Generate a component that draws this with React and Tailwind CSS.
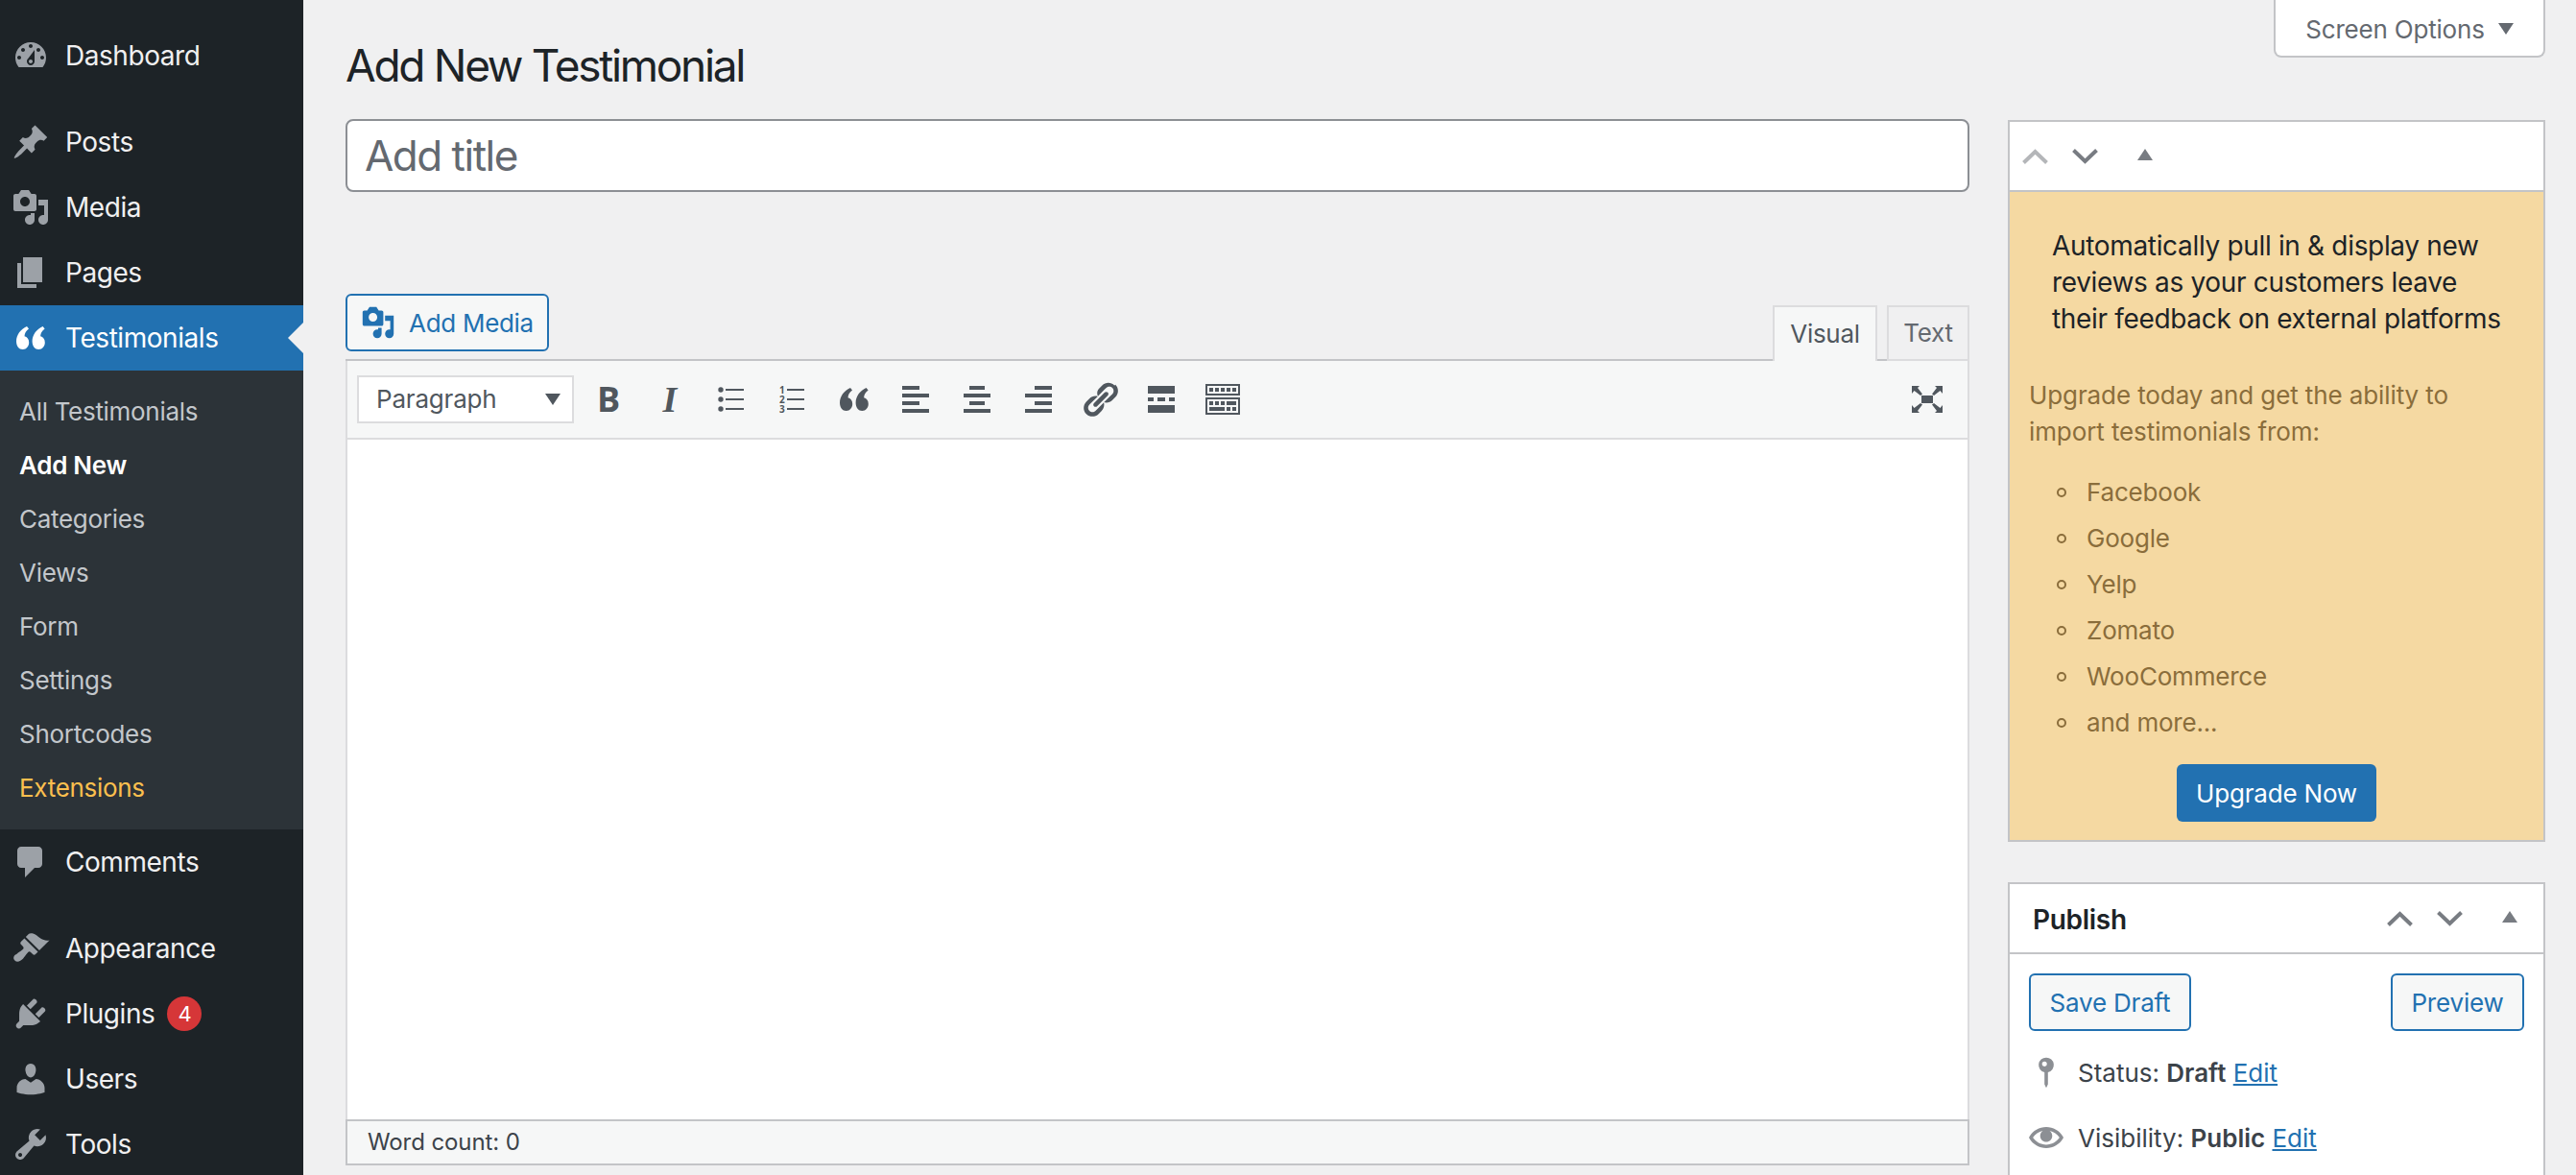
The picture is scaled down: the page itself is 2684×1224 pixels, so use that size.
const paths = {
  dashboard: 'M3.76 16h12.48c1.1-1.37 1.76-3.11 1.76-5 0-4.42-3.58-8-8-8s-8 3.58-8 8c0 1.89.66 3.63 1.76 5zM10 4c.55 0 1 .45 1 1s-.45 1-1 1-1-.45-1-1 .45-1 1-1zM6 6c.55 0 1 .45 1 1s-.45 1-1 1-1-.45-1-1 .45-1 1-1zm8 0c.55 0 1 .45 1 1s-.45 1-1 1-1-.45-1-1 .45-1 1-1zm-5.37 5.55L12 7v6c0 1.1-.9 2-2 2s-2-.9-2-2c0-.57.24-1.08.63-1.45zM4 10c.55 0 1 .45 1 1s-.45 1-1 1-1-.45-1-1 .45-1 1-1zm12 0c.55 0 1 .45 1 1s-.45 1-1 1-1-.45-1-1 .45-1 1-1zm-5 3c0-.55-.45-1-1-1s-1 .45-1 1 .45 1 1 1 1-.45 1-1z',
  post: 'M10.44 3.02l1.82-1.82 6.36 6.35-1.83 1.82c-1.05-.68-2.48-.57-3.41.36l-.75.75c-.92.93-1.04 2.35-.35 3.41l-1.83 1.82-2.41-2.41-2.8 2.79c-.42.42-3.38 2.71-3.8 2.29s1.86-3.39 2.28-3.81l2.79-2.79L4.1 9.36l1.83-1.82c1.05.69 2.48.57 3.4-.36l.75-.75c.93-.92 1.05-2.35.36-3.41z',
  media: 'M13 11V4c0-.55-.45-1-1-1h-1.67L9 1H5L3.67 3H2c-.55 0-1 .45-1 1v7c0 .55.45 1 1 1h10c.55 0 1-.45 1-1zM7 4.5c1.38 0 2.5 1.12 2.5 2.5S8.38 9.5 7 9.5 4.5 8.38 4.5 7 5.62 4.5 7 4.5zM14 6h5v10.5c0 1.38-1.12 2.5-2.5 2.5S14 17.88 14 16.5s1.12-2.5 2.5-2.5c.17 0 .34.02.5.05V9h-3V6zm-4 8.05V13h2v3.5c0 1.38-1.12 2.5-2.5 2.5S7 17.88 7 16.5 8.12 14 9.5 14c.17 0 .34.02.5.05z',
  page: 'M6 15V2h10v13H6zm-1 1h8v2H3V5h2v11z',
  comments: 'M5 2h9c1.1 0 2 .9 2 2v7c0 1.1-.9 2-2 2h-2l-5 5v-5H5c-1.1 0-2-.9-2-2V4c0-1.1.9-2 2-2z',
  appearance: 'M14.48 11.06L7.41 3.99l1.5-1.5c.5-.56 2.3-.47 3.51.32 1.21.8 1.43 1.28 2.91 2.1 1.18.64 2.45 1.26 4.45.85zm-.71.71L6.7 4.7 4.93 6.47c-.39.39-.39 1.02 0 1.41l1.06 1.06c.39.39.39 1.03 0 1.42-.6.6-1.43 1.11-2.21 1.69-.35.26-.7.53-1.01.84C1.43 13.23.4 14.96 1.7 16.26c1.3 1.3 3.04.27 4.37-1.07.31-.31.58-.66.85-1.02.57-.78 1.08-1.61 1.69-2.21.39-.39 1.02-.39 1.41 0l1.06 1.06c.39.39 1.02.39 1.41 0z',
  plugins: 'M13.11 4.36L9.87 7.6 8 5.73l3.24-3.24c.35-.34 1.05-.2 1.56.32.52.51.66 1.21.31 1.55zm-8 1.77l.91-1.12 9.01 9.01-1.19.84c-.71.71-2.63 1.16-3.82 1.16H6.14L4.9 17.26c-.59.59-1.54.59-2.12 0-.59-.58-.59-1.53 0-2.12l1.24-1.24v-3.88c0-1.13.4-3.19 1.09-3.89zm7.26 3.97l3.24-3.24c.34-.35 1.04-.21 1.55.31.52.51.66 1.21.31 1.55l-3.24 3.25z',
  users: 'M10 9.25c-2.27 0-2.73-3.44-2.73-3.44C7 4.02 7.82 2 9.97 2c2.16 0 2.98 2.02 2.71 3.81 0 0-.41 3.44-2.68 3.44zm0 2.57L12.72 10c2.39 0 4.52 2.33 4.52 4.53v2.49s-3.65 1.13-7.24 1.13c-3.65 0-7.24-1.13-7.24-1.13v-2.49c0-2.25 1.94-4.48 4.47-4.48z',
  tools: 'M16.68 9.77c-1.34 1.34-3.3 1.67-4.95.99l-5.41 6.52c-.99.99-2.59.99-3.58 0s-.99-2.59 0-3.57l6.52-5.42c-.68-1.65-.35-3.61.99-4.95 1.28-1.28 3.12-1.62 4.72-1.06l-2.89 2.89 2.82 2.82 2.86-2.87c.53 1.58.18 3.39-1.08 4.65zM3.81 16.21c.4.39 1.04.39 1.43 0 .4-.4.4-1.04 0-1.43-.39-.4-1.03-.4-1.43 0-.39.39-.39 1.03 0 1.43z',
  eye: 'M19.7 9.4C17.7 6 14 3.9 10 3.9S2.3 6 .3 9.4L0 10l.3.6c2 3.4 5.7 5.5 9.7 5.5s7.7-2.1 9.7-5.5l.3-.6-.3-.6zM10 14.1c-3.1 0-6-1.6-7.7-4.1C3.6 8 5.7 6.6 8 6.1c-.9.6-1.5 1.7-1.5 2.9 0 1.9 1.6 3.5 3.5 3.5s3.5-1.6 3.5-3.5c0-1.2-.6-2.3-1.5-2.9 2.3.5 4.4 1.9 5.7 3.9-1.7 2.5-4.6 4.1-7.7 4.1z',
  pin: 'M10 1.500a4.300 4.300 0 0 1 1 8.500V17l-1 2-1-2v-7a4.300 4.300 0 0 1 1-8.500zM9 3.800a1.400 1.400 0 1 0 0 2.800 1.400 1.400 0 0 0 0-2.800z',
  link: 'M17.74 2.76c1.68 1.69 1.68 4.41 0 6.1l-1.53 1.52c-1.12 1.12-2.7 1.47-4.14 1.09l2.62-2.61.76-.77.76-.76c.84-.84.84-2.2 0-3.04-.84-.85-2.2-.85-3.04 0l-.77.76-3.38 3.38c-.37-.77-.44-1.64-.21-2.44.14-.5.4-.98.8-1.38l1.53-1.53c1.68-1.68 4.41-1.68 6.1 0zM8.59 13.43l5.34-5.34c.42-.42.42-1.1 0-1.52-.44-.43-1.13-.39-1.53 0l-5.33 5.34c-.42.42-.42 1.1 0 1.52.44.43 1.13.39 1.52 0zm-.76 2.29l4.14-4.15c.38 1.44.03 3.02-1.09 4.14l-1.52 1.53c-1.69 1.68-4.41 1.68-6.1 0-1.68-1.68-1.68-4.42 0-6.1l1.53-1.52c1.12-1.12 2.7-1.47 4.14-1.1l-4.14 4.15c-.85.84-.85 2.2 0 3.05.84.84 2.2.84 3.04 0z',
}

function Dash({ name, className }) {
  return (
    <svg viewBox="0 0 20 20" className={className} fill="currentColor" fillRule="evenodd">
      <path d={paths[name]} />
    </svg>
  )
}

// the "66" quote mark, used in the menu and in the toolbar
function Quote({ className }) {
  return (
    <svg viewBox="0 0 30 24" className={className} fill="currentColor">
      <path d="M11 0l2 2.500C10 5 8.800 7 8.500 10.300c2.800.5 4.700 3 4.700 6.500 0 4-2.700 7.200-6.500 7.200S0 20.500 0 15.500C0 8.800 4.500 3 11 0z" />
      <path d="M27.600 0l2 2.500c-3 2.500-4.200 4.500-4.500 7.800 2.800.5 4.700 3 4.700 6.500 0 4-2.700 7.200-6.500 7.200s-6.700-3.500-6.700-8.500c0-6.700 4.500-12.500 11-15.500z" />
    </svg>
  )
}

const topItems = [
  { icon: 'post', label: 'Posts' },
  { icon: 'media', label: 'Media' },
  { icon: 'page', label: 'Pages' },
]
const subItems = ['All Testimonials', 'Add New', 'Categories', 'Views', 'Form', 'Settings', 'Shortcodes', 'Extensions']

function MenuItem({ icon, label, active, children }) {
  return (
    <div className={`flex h-[68px] items-center text-[28px] tracking-[-0.45px] ${active ? 'bg-[#2271b1] text-white' : 'text-[#f0f0f1]'}`}>
      <div className={`ml-[12px] w-[40px] h-[40px] shrink-0 flex items-center justify-center ${active ? 'text-white' : 'text-[#9ca1a7]'}`}>
        {icon === 'quote' ? <Quote className="w-[30px] h-[24px]" /> : <Dash name={icon} className="w-[40px] h-[40px]" />}
      </div>
      <span className="ml-[16px]">{label}</span>
      {children}
    </div>
  )
}

function Sidebar() {
  return (
    <aside className="w-[316px] shrink-0 bg-[#1d2327] pt-[24px]">
      <MenuItem icon="dashboard" label="Dashboard" />
      <div className="h-[22px]" />
      {topItems.map(i => <MenuItem key={i.label} icon={i.icon} label={i.label} />)}
      <div className="relative">
        <MenuItem icon="quote" label="Testimonials" active />
        <div className="absolute right-0 top-[18px] w-0 h-0 border-y-[16px] border-y-transparent border-r-[16px] border-r-[#f0f0f1]" />
      </div>
      <div className="bg-[#2c3338] pt-[14px] pb-[16px] text-[26px] tracking-[-0.3px]">
        {subItems.map(s => (
          <div
            key={s}
            className={`h-[56px] pl-[20px] flex items-center ${s === 'Add New' ? 'font-semibold text-white' : s === 'Extensions' ? 'text-[#fbbf4e]' : 'text-[#c3c7cb]'}`}
          >
            {s}
          </div>
        ))}
      </div>
      <MenuItem icon="comments" label="Comments" />
      <div className="h-[22px]" />
      <MenuItem icon="appearance" label="Appearance" />
      <MenuItem icon="plugins" label="Plugins">
        <span className="ml-[13px] w-[36px] h-[36px] rounded-full bg-[#d63638] text-white text-[22px] flex items-center justify-center">4</span>
      </MenuItem>
      <MenuItem icon="users" label="Users" />
      <MenuItem icon="tools" label="Tools" />
    </aside>
  )
}

function BarLines({ rows }) {
  // rows: [x, width] per bar of an alignment icon
  return (
    <svg viewBox="0 0 28 28" className="w-[28px] h-[28px]" fill="#50575e">
      {rows.map(([x, w], i) => <rect key={i} x={x} y={i * 8} width={w} height="4" />)}
    </svg>
  )
}

function Tool({ children }) {
  return <div className="w-[64px] h-[50px] shrink-0 flex items-center justify-center text-[#50575e]">{children}</div>
}

function Toolbar() {
  return (
    <div className="h-[80px] bg-[#f6f7f7] flex items-center pl-[10px] pr-[26px] border-x-2 border-[#dcdcde]">
      <div className="w-[226px] h-[50px] border-2 border-[#dcdcde] bg-white flex items-center justify-between pl-[18px] pr-[12px] text-[26px] tracking-[-0.2px] text-[#50575e]">
        <span className="-mt-[2px]">Paragraph</span>
        <svg viewBox="0 0 16 12" className="w-[16px] h-[12px]" fill="#50575e"><path d="M0 0h16L8 12z" /></svg>
      </div>
      <div className="w-[4px]" />
      <Tool><span className="text-[36px] leading-none font-bold [font-family:'Open_Sans',sans-serif]">B</span></Tool>
      <Tool><span className="text-[38px] leading-none font-bold italic [font-family:'Liberation_Serif',serif]">I</span></Tool>
      <Tool>
        <svg viewBox="0 0 28 28" className="w-[28px] h-[28px]" fill="#50575e">
          <circle cx="3" cy="4" r="2.700" /><circle cx="3" cy="14" r="2.700" /><circle cx="3" cy="24" r="2.700" />
          <rect x="8" y="3" width="19" height="2" /><rect x="8" y="13" width="19" height="2" /><rect x="8" y="23" width="19" height="2" />
        </svg>
      </Tool>
      <Tool>
        <svg viewBox="-4 -8 36 44" className="w-[36px] h-[44px]" fill="#50575e">
          <text x="0" y="8" fontSize="10" fontWeight="700" fontFamily="Open Sans">1</text>
          <text x="0" y="18" fontSize="10" fontWeight="700" fontFamily="Open Sans">2</text>
          <text x="0" y="28" fontSize="10" fontWeight="700" fontFamily="Open Sans">3</text>
          <rect x="8" y="3" width="18" height="2" /><rect x="8" y="13" width="18" height="2" /><rect x="8" y="23" width="18" height="2" />
        </svg>
      </Tool>
      <Tool><Quote className="w-[30px] h-[24px]" /></Tool>
      <Tool><BarLines rows={[[0, 18], [0, 28], [0, 18], [0, 28]]} /></Tool>
      <Tool><BarLines rows={[[6, 16], [0, 28], [6, 16], [0, 28]]} /></Tool>
      <Tool><BarLines rows={[[10, 18], [0, 28], [10, 18], [0, 28]]} /></Tool>
      <Tool><Dash name="link" className="w-[42px] h-[42px]" /></Tool>
      <Tool>
        <svg viewBox="0 0 28 28" className="w-[28px] h-[28px]" fill="#50575e">
          <rect x="0" y="0" width="28" height="8" /><rect x="0" y="20" width="28" height="8" />
          <rect x="0" y="12" width="6" height="4" /><rect x="10" y="12" width="8" height="4" /><rect x="22" y="12" width="6" height="4" />
        </svg>
      </Tool>
      <Tool>
        <svg viewBox="0 0 36 32" className="w-[36px] h-[32px]" fill="#50575e">
          <path fillRule="evenodd" d="M0 0h36v12H0zM2 2v8h32V2zM0 14h36v18H0zM2 16v14h32V16z" />
          <rect x="4" y="4" width="4" height="4" /><rect x="10" y="4" width="4" height="4" /><rect x="16" y="4" width="4" height="4" /><rect x="22" y="4" width="4" height="4" /><rect x="28" y="4" width="4" height="4" />
          <rect x="4" y="18" width="4" height="4" /><rect x="10" y="18" width="4" height="4" /><rect x="16" y="18" width="4" height="4" /><rect x="22" y="18" width="10" height="4" />
          <rect x="4" y="24" width="16" height="4" /><rect x="22" y="24" width="4" height="4" /><rect x="28" y="24" width="4" height="4" />
        </svg>
      </Tool>
      <div className="ml-auto">
        <svg viewBox="0 0 32 28" className="w-[32px] h-[28px]" fill="#50575e">
          <rect x="10" y="10" width="12" height="8" />
          <path d="M0 0h8L6 2l5 6.500-2 1.500L2.500 5 0 8z" />
          <path d="M32 0h-8l2 2-5 6.500 2 1.500 6.500-5L32 8z" />
          <path d="M0 28h8l-2-2 5-6.500-2-1.500-6.500 5L0 20z" />
          <path d="M32 28h-8l2-2-5-6.500 2-1.500 6.500 5 2.500-3z" />
        </svg>
      </div>
    </div>
  )
}

function Editor() {
  return (
    <div className="w-[1692px]">
      <div className="h-[68px] mt-[106px] flex items-start justify-between">
        <button className="h-[60px] w-[212px] flex items-center justify-center gap-[14px] border-2 border-[#2271b1] rounded-[6px] bg-[#f6f7f7] text-[#2271b1] text-[26px] tracking-[-0.3px]">
          <Dash name="media" className="w-[36px] h-[36px]" />
          Add Media
        </button>
        <div className="relative z-10 flex gap-[10px] self-end -mb-[2px] text-[26px] tracking-[-0.3px]">
          <div className="w-[109px] h-[58px] pb-[2px] border-2 border-b-0 border-[#dcdcde] bg-[#f6f7f7] text-[#50575e] flex items-center justify-center">Visual</div>
          <div className="w-[86px] h-[58px] pb-[2px] border-2 border-[#dcdcde] bg-[#f0f0f1] text-[#646970] flex items-center justify-center">Text</div>
        </div>
      </div>
      <div className="h-[840px] border-y-2 border-[#c3c4c7] flex flex-col bg-white">
        <Toolbar />
        <div className="flex-1 border-2 border-b-0 border-[#dcdcde]" />
        <div className="h-[46px] border-2 border-b-0 border-[#c3c4c7] bg-[#f6f7f7] flex items-center pl-[21px] text-[24px] tracking-[-0.1px] text-[#3c434a]">Word count: 0</div>
      </div>
    </div>
  )
}

function Chevron({ up, className }) {
  return (
    <div className="w-[40px] h-[40px] flex items-center justify-center">
      <svg viewBox="0 0 27 16" className={`w-[27px] h-[16px] ${className}`} fill="none" stroke="currentColor" strokeWidth="4">
        <path d={up ? 'M1.500 14.500L13.500 3l12 11.500' : 'M1.500 1.500L13.500 13l12-11.500'} />
      </svg>
    </div>
  )
}

function PanelControls({ upClass }) {
  return (
    <>
      <Chevron up className={upClass} />
      <div className="ml-[12px]"><Chevron className="text-[#787c82]" /></div>
      <svg viewBox="0 0 16 12" className="w-[16px] h-[12px] ml-[35px] -mt-[4px]" fill="#787c82"><path d="M8 0l8 12H0z" /></svg>
    </>
  )
}

function Sidecol() {
  const sources = ['Facebook', 'Google', 'Yelp', 'Zomato', 'WooCommerce', 'and more...']
  return (
    <div className="w-[560px]">
      <div className="h-[752px] border-2 border-[#c3c4c7] flex flex-col">
        <div className="h-[73px] bg-white border-b-2 border-[#c3c4c7] flex items-center pl-[6px]">
          <PanelControls upClass="text-[#b4b6b9]" />
        </div>
        <div className="flex-1 bg-[#f5d9a2] text-center">
          <p className="pt-[37px] pl-[44px] pr-[40px] text-left text-[28px] leading-[38px] tracking-[-0.33px] text-[#1d2327]">
            Automatically pull in &amp; display new reviews as your customers leave their feedback on external platforms
          </p>
          <p className="mt-[42px] pl-[20px] pr-[20px] text-left text-[26px] leading-[38px] tracking-[-0.1px] text-[#8a6d3b]">
            Upgrade today and get the ability to import testimonials from:
          </p>
          <ul className="mt-[20px] pl-[49px] text-left text-[26px] leading-[48px] tracking-[-0.2px] text-[#8a6d3b]">
            {sources.map(s => (
              <li key={s} className="flex items-center gap-[21px]">
                <span className="w-[10px] h-[10px] rounded-full border-2 border-[#8a6d3b]" />
                {s}
              </li>
            ))}
          </ul>
          <button className="mt-[19px] w-[208px] h-[60px] rounded-[6px] bg-[#2271b1] text-white text-[26px] tracking-[-0.2px]">Upgrade Now</button>
        </div>
      </div>
      <div className="mt-[42px] h-[400px] border-2 border-[#c3c4c7] bg-white">
        <div className="h-[73px] border-b-2 border-[#c3c4c7] flex items-center pl-[24px] pr-[27px]">
          <span className="mt-[2px] text-[28px] font-semibold tracking-[-0.3px] text-[#1d2327] mr-auto">Publish</span>
          <PanelControls upClass="text-[#787c82]" />
        </div>
        <div className="px-[20px] pt-[20px] text-[26px]">
          <div className="flex justify-between tracking-[-0.2px]">
            <button className="w-[169px] h-[60px] rounded-[6px] border-2 border-[#2271b1] bg-[#f6f7f7] text-[#2271b1]">Save Draft</button>
            <button className="w-[139px] h-[60px] rounded-[6px] border-2 border-[#2271b1] bg-[#f6f7f7] text-[#2271b1]">Preview</button>
          </div>
          <div className="mt-[23px] h-[40px] flex items-center text-[#3c434a]">
            <Dash name="pin" className="w-[36px] h-[36px] text-[#8c8f94]" />
            <span className="ml-[15px]">Status: <b className="font-semibold">Draft</b> <a className="text-[#2271b1] underline">Edit</a></span>
          </div>
          <div className="mt-[28px] h-[40px] flex items-center text-[#3c434a]">
            <Dash name="eye" className="w-[36px] h-[36px] text-[#8c8f94]" />
            <span className="ml-[15px]">Visibility: <b className="font-semibold">Public</b> <a className="text-[#2271b1] underline">Edit</a></span>
          </div>
        </div>
      </div>
    </div>
  )
}

export default function App() {
  return (
    <div className="flex w-[2684px] h-[1224px] overflow-hidden bg-[#f0f0f1] [font-family:Inter,sans-serif]">
      <Sidebar />
      <main className="flex-1 pl-[44px] pr-[32px]">
        <div className="h-[125px] flex justify-between items-start">
          <h1 className="mt-[40px] text-[46px] leading-[56px] tracking-[-2.3px] text-[#1d2327]">Add New Testimonial</h1>
          <div className="w-[283px] h-[60px] pt-[2px] bg-white border-2 border-t-0 border-[#c3c4c7] rounded-b-[8px] flex items-center justify-center gap-[14px] text-[26px] tracking-[-0.2px] text-[#646970]">
            Screen Options
            <svg viewBox="0 0 16 12" className="w-[16px] h-[12px]" fill="#646970"><path d="M0 0h16L8 12z" /></svg>
          </div>
        </div>
        <div className="flex gap-[40px] items-start">
          <div className="w-[1692px]">
            <div className="h-[76px] -mt-[1px] border-2 border-[#8c8f94] rounded-[8px] bg-white flex items-center pl-[18px] text-[44px] tracking-[-1.500px] text-[#646970]">Add title</div>
            <Editor />
          </div>
          <Sidecol />
        </div>
      </main>
    </div>
  )
}
